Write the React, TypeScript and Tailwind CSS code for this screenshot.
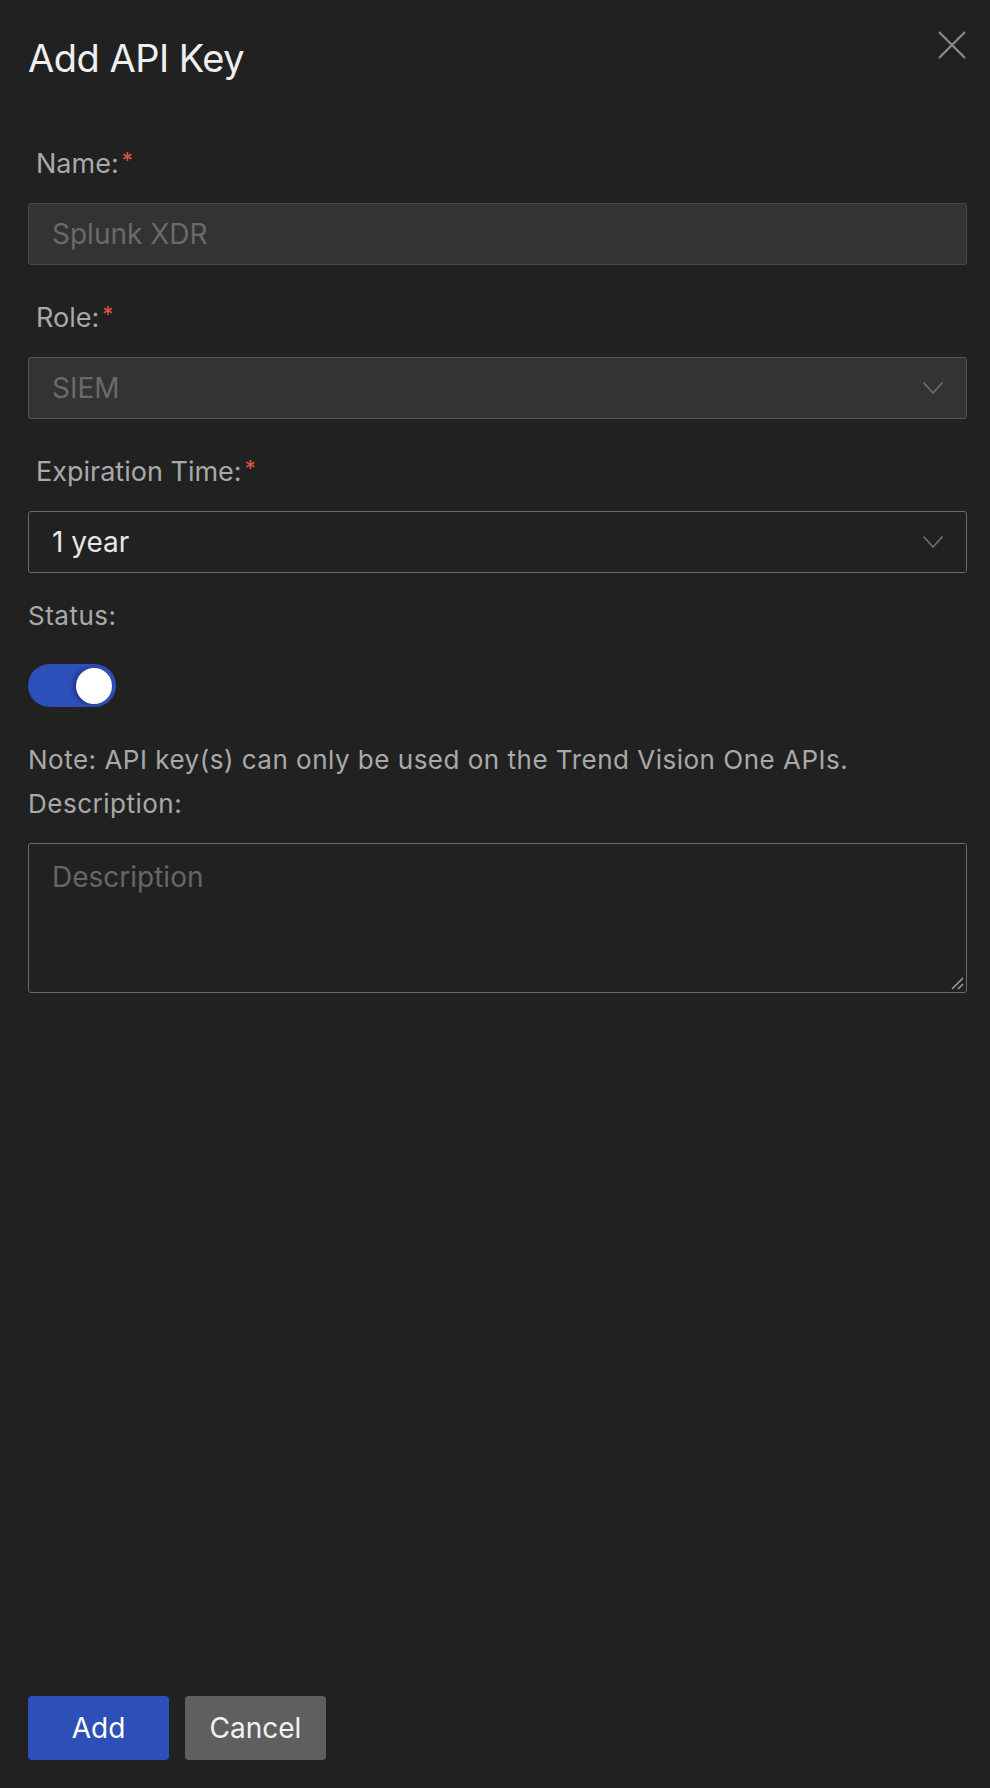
import React from "react";

function Required({ children }: { children: React.ReactNode }) {
  return (
    <div className="flex h-[34px] items-center pl-2 text-[27px] leading-[34px] text-[#a9a9a9]">
      <span>{children}</span>
      <span className="ml-[3px] self-start text-[22px] leading-[26px] text-[#e5534b]">*</span>
    </div>
  );
}

function Chevron() {
  return (
    <svg width="22" height="14" viewBox="0 0 22 14" fill="none" className="shrink-0">
      <path d="M1.5 1.5 L11 12 L20.5 1.5" stroke="#6f6f6f" strokeWidth="1.8" />
    </svg>
  );
}

export default function App() {
  return (
    <div
      className="flex min-h-screen flex-col bg-[#212121] pl-7 pr-[23px]"
      style={{ fontFamily: "Inter, 'Noto Sans', sans-serif" }}
    >
      {/* Header */}
      <div className="flex items-start justify-between pt-9">
        <h1 className="text-[38px] font-normal leading-[44px] tracking-[-0.5px] text-[#efefef]">
          Add API Key
        </h1>
        <button className="mr-[1px] mt-[-5px] text-[#8a8a8a]">
          <svg width="28" height="28" viewBox="0 0 28 28" fill="none">
            <path d="M1 1 L27 27 M27 1 L1 27" stroke="currentColor" strokeWidth="2.2" />
          </svg>
        </button>
      </div>

      {/* Form */}
      <div className="mt-[67px] flex flex-col">
        <Required>Name:</Required>
        <div className="mt-[22px] flex h-[62px] items-center rounded-[3px] border border-[#474747] bg-[#333333] px-[23px] text-[28px] text-[#6a6a6a]">
          Splunk XDR
        </div>

        <div className="mt-[36px]">
          <Required>Role:</Required>
        </div>
        <div className="mt-[22px] flex h-[62px] items-center justify-between rounded-[3px] border border-[#555555] bg-[#333333] pl-[23px] pr-[22px] text-[28px] text-[#6a6a6a]">
          <span>SIEM</span>
          <Chevron />
        </div>

        <div className="mt-[36px]">
          <Required>Expiration Time:</Required>
        </div>
        <div className="mt-[22px] flex h-[62px] items-center justify-between rounded-[3px] border border-[#6a6a6a] bg-[#212121] pl-[23px] pr-[22px] text-[28px] text-[#e6e6e6]">
          <span>1 year</span>
          <Chevron />
        </div>

        <div className="mt-[27px] text-[26px] leading-[32px] tracking-[0.5px] text-[#a9a9a9]">
          Status:
        </div>

        <div className="mt-[32px] flex h-[43px] w-[88px] items-center justify-end rounded-full bg-[#2c50b9] pr-[4px]">
          <div className="h-[36px] w-[36px] rounded-full bg-white shadow-[-3px_0_4px_rgba(0,0,40,0.35)]" />
        </div>

        <p className="mt-[31px] text-[26px] leading-[44px] tracking-[0.5px] text-[#a9a9a9]">
          Note: API key(s) can only be used on the Trend Vision One APIs.
        </p>
        <div className="text-[26px] leading-[44px] tracking-[0.5px] text-[#a9a9a9]">
          Description:
        </div>

        <div className="relative mt-[17px]">
          <textarea
            placeholder="Description"
            className="block h-[150px] w-full resize-none rounded-[3px] border border-[#6a6a6a] bg-[#212121] px-[23px] pb-[13px] pt-[16px] text-[28px] leading-[34px] text-[#e6e6e6] outline-none placeholder:text-[#666666]"
          />
          <svg
            width="14"
            height="14"
            viewBox="0 0 14 14"
            className="pointer-events-none absolute bottom-[3px] right-[3px]"
          >
            <path d="M2 13 L13 2 M8 13 L13 8" stroke="#a0a0a0" strokeWidth="1.5" />
          </svg>
        </div>
      </div>

      {/* Footer */}
      <div className="mt-auto flex gap-4 pb-7">
        <button className="flex h-16 w-[141px] items-center justify-center rounded-[4px] bg-[#2c50b8] text-[28px] text-white">
          Add
        </button>
        <button className="flex h-16 w-[141px] items-center justify-center rounded-[4px] bg-[#5f5f5f] text-[28px] text-[#f2f2f2]">
          Cancel
        </button>
      </div>
    </div>
  );
}
